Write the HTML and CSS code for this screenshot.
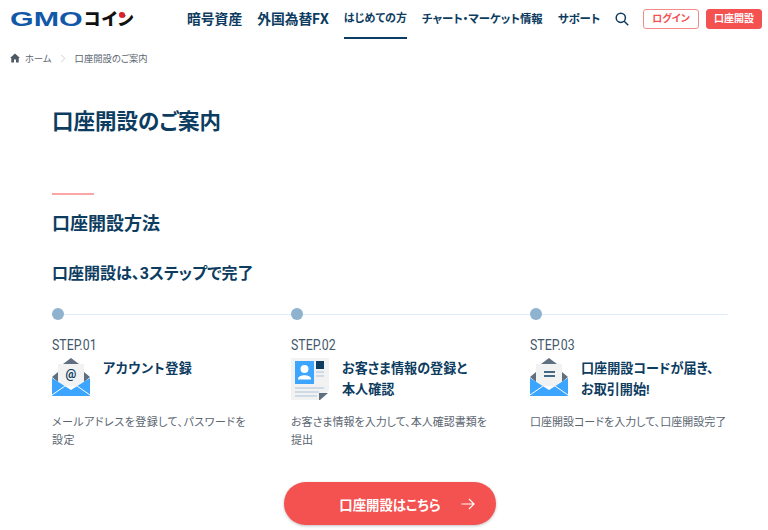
FILE: index.html
```html
<!DOCTYPE html>
<html lang="ja">
<head>
<meta charset="UTF-8" />
<meta name="viewport" content="width=device-width, initial-scale=1" />
<title>口座開設のご案内</title>
<link rel="stylesheet" href="styles.css">
</head>
<body>
  <header class="header">
    <a class="logo" href="#"><span class="logo-gmo">GMO</span><span class="logo-coin">コイン</span><i class="logo-dot"></i></a>
    <nav class="nav">
      <a class="nav-big" href="#">暗号資産</a>
      <a class="nav-big" href="#">外国為替FX</a>
      <a class="nav-small is-current" href="#">はじめての方</a>
      <a class="nav-small" href="#">チャート・マーケット情報</a>
      <a class="nav-small" href="#">サポート</a>
    </nav>
    <div class="header-right">
      <svg class="search" viewBox="0 0 14 14" aria-hidden="true">
        <circle cx="5.8" cy="5.8" r="4.6" />
        <line x1="9.2" y1="9.2" x2="13.2" y2="13.2" />
      </svg>
      <a class="btn-login" href="#">ログイン</a>
      <a class="btn-open" href="#">口座開設</a>
    </div>
  </header>

  <div class="breadcrumb">
    <svg class="home" viewBox="0 0 11 10" aria-hidden="true">
      <path d="M5.5 0 L11 5 L9.6 5 L9.6 10 L6.6 10 L6.6 6.6 L4.4 6.6 L4.4 10 L1.4 10 L1.4 5 L0 5 Z" />
    </svg>
    <span>ホーム</span>
    <svg class="crumb-sep" viewBox="0 0 6 10" aria-hidden="true"><path d="M1 1 L5 5 L1 9" /></svg>
    <span>口座開設のご案内</span>
  </div>

  <main class="main">
    <h1>口座開設のご案内</h1>
    <div class="rule"></div>
    <h2>口座開設方法</h2>
    <h3>口座開設は、3ステップで完了</h3>

    <div class="steps">
      <section class="step step-kana">
        <div class="step-track"><span class="dot"></span></div>
        <div class="step-label">STEP.01</div>
        <div class="step-head">
          <svg class="step-icon" viewBox="0 0 38 38" aria-hidden="true">
            <path fill="#5f6f80" d="M19 0 L27 6 L11 6 Z M0 19 L6 14 L6 24 Z M38 19 L32 14 L32 24 Z" />
            <rect fill="#f2f2f2" x="6" y="6" width="26" height="22" />
            <path fill="#3ba5ff" d="M0 20 L19 32 L38 20 L38 38 L0 38 Z" />
            <path fill="none" stroke="#fff" stroke-width="1" d="M0 37 L13 28 M38 37 L25 28" />
            <text class="icon-at" x="19" y="20" text-anchor="middle">@</text>
          </svg>
          <h4>アカウント登録</h4>
        </div>
        <p>メールアドレスを登録して、パスワードを<br>設定</p>
      </section>

      <section class="step">
        <div class="step-track"><span class="dot"></span></div>
        <div class="step-label">STEP.02</div>
        <div class="step-head">
          <svg class="step-icon" viewBox="0 0 38 42" aria-hidden="true">
            <path fill="#f2f2f2" d="M0 0 L38 0 L38 32 L28 42 L0 42 Z" />
            <rect fill="#3ba5ff" x="4" y="3" width="19" height="23" />
            <circle fill="#fff" cx="13.5" cy="11" r="4" />
            <path fill="#fff" d="M7 21 C7 16 20 16 20 21 L20 21.5 L7 21.5 Z" />
            <rect fill="#0d3c61" x="25" y="3" width="8" height="8" />
            <path stroke="#a9c4dc" stroke-width="1.2" d="M25 14 L33 14 M25 18 L33 18 M4 30 L33 30 M4 34 L28 34 M4 38 L26 38" />
            <path fill="#5f6f80" d="M37 35 L28 35 L28 42 L29 42 Z" />
          </svg>
          <h4>お客さま情報の登録と<br>本人確認</h4>
        </div>
        <p>お客さま情報を入力して、本人確認書類を<br>提出</p>
      </section>

      <section class="step">
        <div class="step-track"><span class="dot"></span></div>
        <div class="step-label">STEP.03</div>
        <div class="step-head">
          <svg class="step-icon" viewBox="0 0 38 38" aria-hidden="true">
            <path fill="#5f6f80" d="M19 0 L27 6 L11 6 Z M0 19 L6 14 L6 24 Z M38 19 L32 14 L32 24 Z" />
            <rect fill="#f2f2f2" x="6" y="6" width="26" height="22" />
            <path stroke="#0d3c61" stroke-width="1.5" d="M14 14 L25 14 M14 18 L25 18" />
            <path fill="#3ba5ff" d="M0 20 L19 32 L38 20 L38 38 L0 38 Z" />
            <path fill="none" stroke="#fff" stroke-width="1" d="M0 37 L13 28 M38 37 L25 28" />
          </svg>
          <h4>口座開設コードが届き、<br>お取引開始!</h4>
        </div>
        <p>口座開設コードを入力して、口座開設完了</p>
      </section>
    </div>

    <div class="cta-wrap">
      <a class="cta" href="#">
        <span>口座開設はこちら</span>
        <svg class="cta-arrow" viewBox="0 0 14 12" aria-hidden="true"><path d="M0.5 6 L13 6 M8 1 L13 6 L8 11" /></svg>
      </a>
    </div>
  </main>
</body>
</html>
```

FILE: styles.css
```css
:root {
  --navy: #0d3c61;
  --red: #f45151;
  --gray: #5a6570;
}
html, body {
  margin: 0;
  height: 530px;
  overflow: hidden;
  background: #fff;
}
body {
  font-family: Roboto, 'Noto Sans CJK JP', sans-serif;
  font-feature-settings: "palt";
  color: var(--navy);
}
a {
  color: inherit;
  text-decoration: none;
}
.header {
  display: flex;
  align-items: flex-start;
  height: 39px;
  padding: 0 6px 0 10px;
}
.logo {
  position: relative;
  display: flex;
  align-items: center;
  width: 125px;
  height: 38px;
  white-space: nowrap;
  font-weight: 900;
}
.logo-gmo {
  display: inline-block;
  width: 74px;
  font-family: 'Liberation Sans', sans-serif;
  font-size: 19.5px;
  font-weight: 700;
  line-height: 15px;
  color: #1258a8;
  transform: scaleX(1.56);
  transform-origin: left center;
}
.logo-coin {
  font-size: 17px;
  line-height: 15px;
  color: #111;
  letter-spacing: 1px;
}
.logo-dot {
  position: absolute;
  left: 109px;
  top: 12px;
  width: 6px;
  height: 6px;
  border-radius: 50%;
  background: #e0202a;
}
.nav {
  display: flex;
  gap: 15px;
  margin-left: 52px;
  font-weight: 700;
}
.nav a {
  height: 37px;
  line-height: 38px;
  white-space: nowrap;
}
.nav-big {
  font-size: 13.8px;
}
.nav-small {
  font-size: 11.4px;
}
.is-current {
  border-bottom: 2px solid var(--navy);
  font-size: 11px;
}
.header-right {
  display: flex;
  align-items: flex-start;
  margin-left: auto;
}
.search {
  width: 14px;
  height: 14px;
  margin: 12px 0 0;
  fill: none;
  stroke: var(--navy);
  stroke-width: 1.5;
}
.btn-login,
.btn-open {
  box-sizing: border-box;
  width: 56px;
  height: 20px;
  margin-top: 9px;
  border-radius: 3px;
  border: 1px solid #f58a8a;
  font-size: 10px;
  font-weight: 700;
  line-height: 18px;
  text-align: center;
}
.btn-login {
  margin-left: 14px;
  color: var(--red);
}
.btn-open {
  margin-left: 7px;
  border-color: var(--red);
  background: var(--red);
  color: #fff;
}
.breadcrumb {
  display: flex;
  align-items: center;
  height: 14px;
  margin: 12px 0 0 10px;
  font-size: 9.3px;
  color: var(--gray);
}
.home {
  width: 10px;
  height: 10px;
  margin-right: 5px;
  fill: #4d5a66;
}
.crumb-sep {
  width: 6px;
  height: 9px;
  margin: 0 9px 0 8px;
  fill: none;
  stroke: #c4c9ce;
}
.main {
  padding: 0 40px 0 52px;
}
h1 {
  margin: 42px 0 0;
  font-size: 21.5px;
  line-height: 30px;
  font-weight: 700;
}
.rule {
  width: 42px;
  height: 2px;
  margin-top: 56px;
  background: #fba5a5;
}
h2 {
  margin: 16px 0 0;
  font-size: 18px;
  line-height: 26px;
  font-weight: 700;
}
h3 {
  margin: 25px 0 0;
  font-size: 16px;
  line-height: 24px;
  font-weight: 700;
}
.steps {
  display: grid;
  grid-template-columns: 239px 239px 198px;
  margin-top: 22px;
}
.step-track {
  display: flex;
  align-items: center;
  height: 12px;
  background: linear-gradient(#dfeafa, #dfeafa) center / 100% 1px no-repeat;
}
.dot {
  width: 12px;
  height: 12px;
  border-radius: 50%;
  background: #8fb2cf;
}
.step-label {
  margin-top: 17px;
  font-size: 14px;
  line-height: 16px;
  color: #44586c;
  transform: scaleX(0.88);
  transform-origin: left center;
}
.step-head {
  display: flex;
  align-items: flex-start;
  gap: 13px;
  height: 44px;
  margin-top: 5px;
}
.step-icon {
  flex: none;
  width: 38px;
  overflow: visible;
}
h4 {
  margin: 0;
  font-size: 13.1px;
  line-height: 21px;
  font-weight: 700;
}
.step p {
  margin: 12px 0 0;
  font-size: 11px;
  line-height: 18px;
  color: var(--gray);
}
/* katakana runs sit wider in the reference */
.step-kana h4 {
  letter-spacing: 0.5px;
}
.step-kana p {
  letter-spacing: 0.47px;
}
.icon-at {
  font-family: Roboto, sans-serif;
  font-size: 12px;
  font-weight: 700;
  fill: var(--navy);
}
.cta-wrap {
  display: flex;
  justify-content: center;
  margin: 32px 0 0;
}
.cta {
  position: relative;
  display: flex;
  align-items: center;
  justify-content: center;
  width: 212px;
  height: 43px;
  border-radius: 22px;
  background: var(--red);
  color: #fff;
  font-size: 13.4px;
  font-weight: 700;
  box-shadow: 0 1px 3px rgba(0, 0, 0, 0.25);
}
.cta-arrow {
  position: absolute;
  right: 21px;
  top: 16px;
  width: 14px;
  height: 12px;
  fill: none;
  stroke: #fff;
  stroke-width: 1.2;
}
```
